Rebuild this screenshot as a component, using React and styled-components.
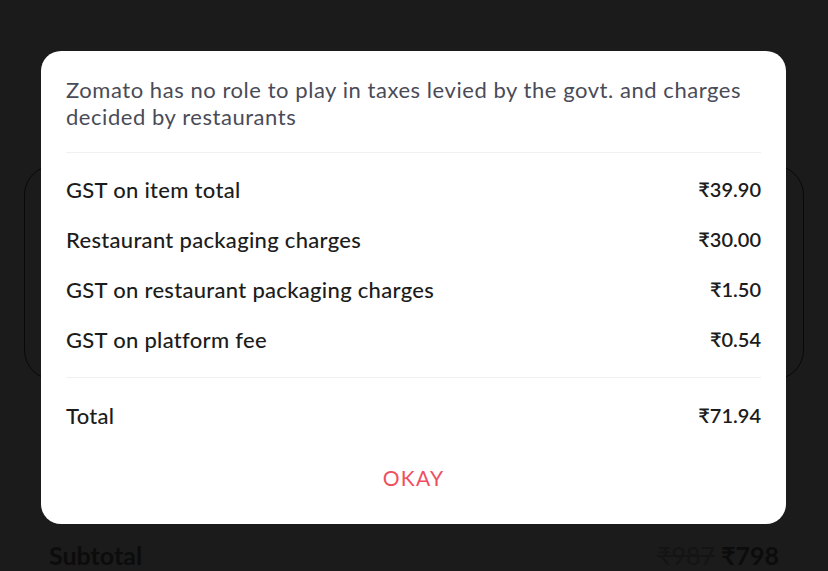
import React from 'react'
import styled, { createGlobalStyle } from 'styled-components'

const GlobalStyle = createGlobalStyle`
    html, body {
        margin: 0;
        padding: 0;
        background: #1b1b1b;
    }
    body {
        font-family: Lato, "Noto Sans", sans-serif;
        width: 828px;
        height: 571px;
        overflow: hidden;
    }
`

const Page = styled.div`
    position: relative;
    width: 828px;
    height: 571px;
    padding-top: 165px;
    box-sizing: border-box;
`

const BackCard = styled.div`
    margin: 0 24px;
    height: 213px;
    border: 1px solid #080808;
    border-radius: 30px;
`

const BackRow = styled.div`
    display: flex;
    justify-content: space-between;
    align-items: center;
    margin: 160px 49px 0 49px;
    font-size: 25px;
    font-weight: 700;
    color: #0c0c0c;
`

const Struck = styled.span`
    color: #141414;
    font-weight: 400;
    text-decoration: line-through;
    margin-right: 6px;
`

const Modal = styled.div`
    position: absolute;
    left: 41px;
    top: 51px;
    width: 745px;
    height: 473px;
    box-sizing: border-box;
    background: #ffffff;
    border-radius: 20px;
    padding: 25px 25px 0 25px;
    display: flex;
    flex-direction: column;
`

const Note = styled.p`
    margin: 0;
    font-size: 22px;
    line-height: 27px;
    letter-spacing: 0.55px;
    color: #4a4b57;
`

const Divider = styled.div`
    height: 1px;
    background: #f0f0f2;
    margin: ${props => props.space};
`

const Row = styled.div`
    display: flex;
    justify-content: space-between;
    align-items: center;
    height: 50px;
    color: #1c1c1c;
`

const Label = styled.span`
    font-size: 22px;
    font-weight: 500;
    letter-spacing: 0.3px;
`

const Amount = styled.span`
    font-size: 20px;
    font-weight: 600;
`

const Okay = styled.button`
    margin-top: 12px;
    height: 50px;
    border: none;
    background: transparent;
    font-family: inherit;
    font-size: 21px;
    letter-spacing: 1.2px;
    color: #ef4f5f;
    cursor: pointer;
`

const charges = [
    ['GST on item total', '₹39.90'],
    ['Restaurant packaging charges', '₹30.00'],
    ['GST on restaurant packaging charges', '₹1.50'],
    ['GST on platform fee', '₹0.54'],
]

export default function App() {
    return (
        <Page>
            <GlobalStyle />
            <BackCard />
            <BackRow>
                <span>Subtotal</span>
                <span>
                    <Struck>₹987</Struck>₹798
                </span>
            </BackRow>
            <Modal>
                <Note>Zomato has no role to play in taxes levied by the govt. and charges decided by restaurants</Note>
                <Divider space="22px 0 11px 0" />
                {charges.map(([label, amount]) => (
                    <Row key={label}>
                        <Label>{label}</Label>
                        <Amount>{amount}</Amount>
                    </Row>
                ))}
                <Divider space="13px 0 12px 0" />
                <Row>
                    <Label>Total</Label>
                    <Amount>₹71.94</Amount>
                </Row>
                <Okay>OKAY</Okay>
            </Modal>
        </Page>
    )
}
